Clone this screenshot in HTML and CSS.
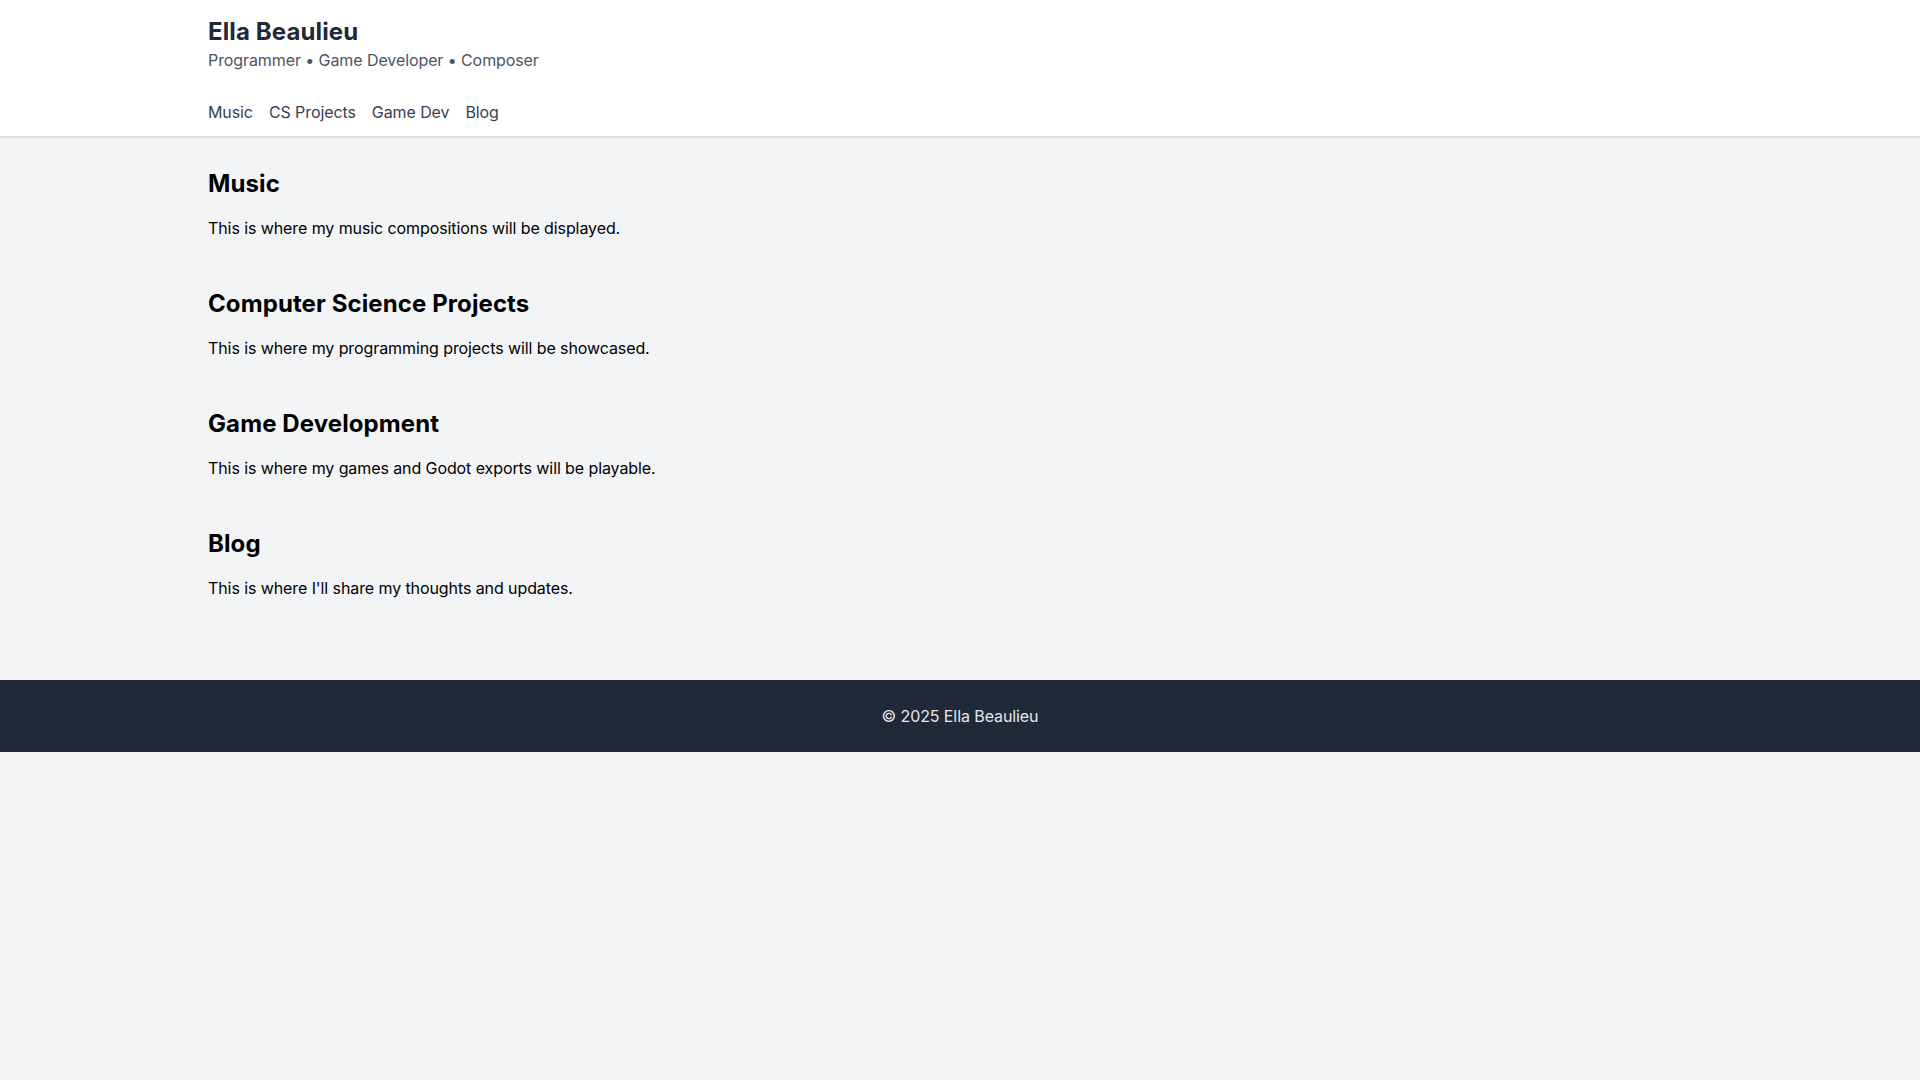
FILE: index.html
```html
<!DOCTYPE html>
<html lang="en">
<head>
<meta charset="utf-8">
<title>Ella Beaulieu</title>
<meta name=viewport content="width=device-width, initial-scale=1">
<link rel="stylesheet" href="styles.css">
</head>
<body>

<header class=site-header>
 <div class=container>
  <h1 class=site-title>Ella Beaulieu</h1>
  <p class=tagline>Programmer &bull; Game Developer &bull; Composer</p>
  <nav class=nav>
   <a href="#music">Music</a>
   <a href="#cs">CS Projects</a>
   <a href="#gamedev">Game Dev</a>
   <a href="#blog">Blog</a>
  </nav>
 </div>
</header>

<main class="container content">
 <section id=music class=section>
  <h2>Music</h2>
  <p>This is where my music compositions will be displayed.</p>
 </section>
 <section id=cs class=section>
  <h2>Computer Science Projects</h2>
  <p>This is where my programming projects will be showcased.</p>
 </section>
 <section id=gamedev class=section>
  <h2>Game Development</h2>
  <p>This is where my games and Godot exports will be playable.</p>
 </section>
 <section id=blog class=section>
  <h2>Blog</h2>
  <p>This is where I'll share my thoughts and updates.</p>
 </section>
</main>

<footer class=site-footer>
 <p>&copy; 2025 Ella Beaulieu</p>
</footer>

</body>
</html>
```

FILE: styles.css
```css
* {
 box-sizing:border-box;
}
body {
 margin:0;
 background-color:#f3f4f6;
 color:#000;
 font-family:Inter,"Noto Sans",sans-serif;
 font-size:16px;
 line-height:24px;
 letter-spacing:-0.09px;
}
.container {
 max-width:1536px;
 margin:0 auto;
 padding:0 16px;
}
.site-header {
 background-color:#fff;
 box-shadow:0 1px 3px rgba(0,0,0,0.1), 0 1px 2px rgba(0,0,0,0.06);
 padding:16px 0 12px;
}
.site-title {
 margin:0;
 font-size:24px;
 line-height:32px;
 font-weight:700;
 letter-spacing:0.12px;
 color:#1f2937;
}
.tagline {
 margin:0;
 color:#4b5563;
}
.nav {
 display:flex;
 gap:16px;
 margin-top:28px;
}
.nav a {
 color:#374151;
 text-decoration:none;
}
.content {
 padding-top:32px;
 padding-bottom:32px;
}
.section {
 margin-bottom:48px;
}
.section h2 {
 margin:0 0 16px;
 font-size:24px;
 line-height:32px;
 font-weight:700;
 letter-spacing:0.1px;
}
.section p {
 margin:0;
}
.site-footer {
 background-color:#1f2937;
 color:#e5e7eb;
 text-align:center;
 padding:24px 16px;
}
.site-footer p {
 margin:0;
}
```
